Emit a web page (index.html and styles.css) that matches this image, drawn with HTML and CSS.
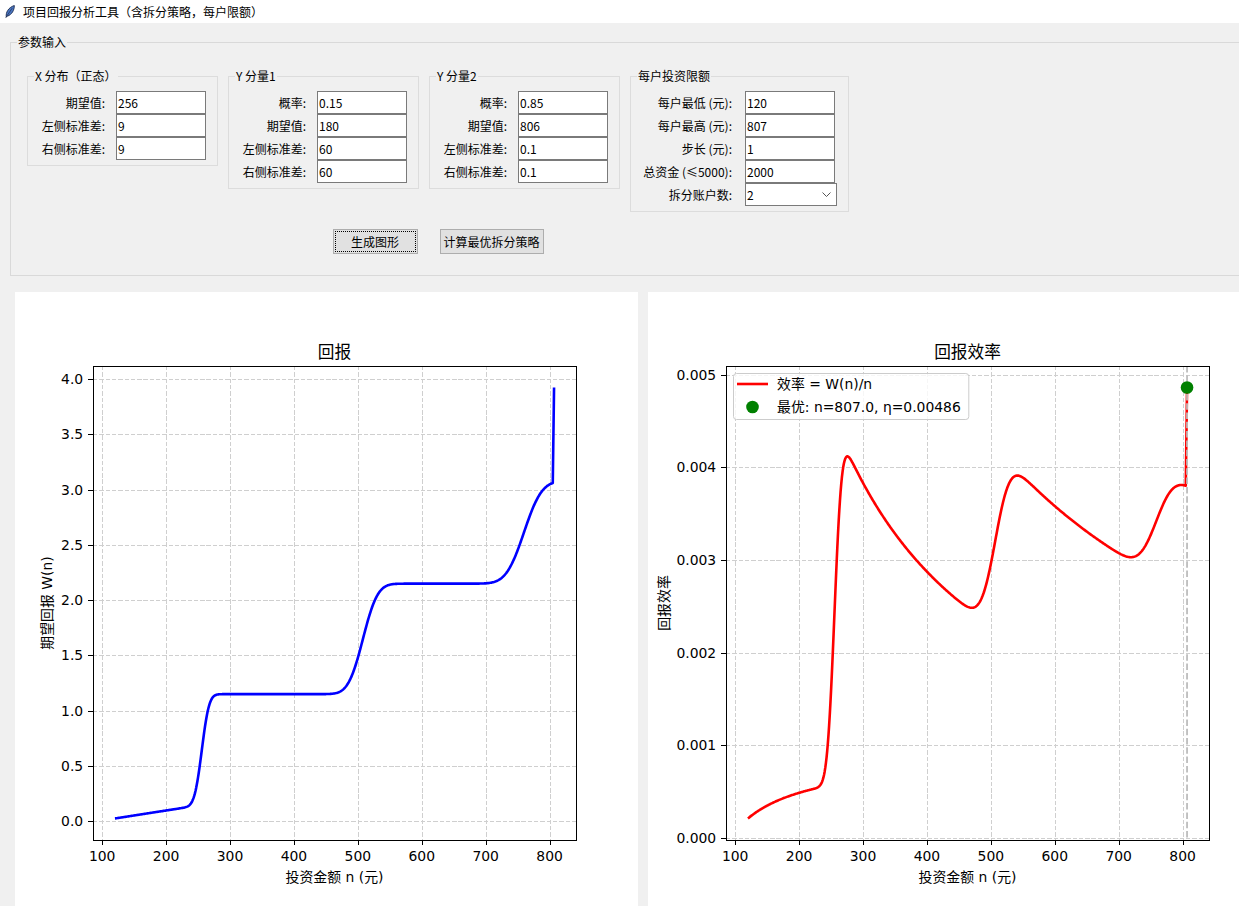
FILE: index.html
```html
<!DOCTYPE html>
<html lang="zh-CN">
<head>
<meta charset="utf-8">
<title>项目回报分析工具（含拆分策略，每户限额）</title>
<link rel="stylesheet" href="styles.css">
</head>
<body>
<div class="app">
  <header class="titlebar">
    <svg class="feather" viewBox="0 0 10 13" width="10" height="13" aria-hidden="true">
      <path d="M1.3 12 C0.6 7.6 3.2 2.6 9.3 0.5 C9.5 5 6.8 9.6 2.6 11.1 Z" fill="#4a76c2" stroke="#1c2b4f" stroke-width="0.9"/>
      <path d="M0.6 12.8 L7.2 3.2" stroke="#1c2b4f" stroke-width="0.7" fill="none"/>
    </svg>
    <span class="wintitle">项目回报分析工具（含拆分策略，每户限额）</span>
  </header>

  <fieldset class="params">
    <legend>参数输入</legend>
    <div class="params-inner">
      <div class="groups">
        <fieldset class="group">
          <legend>X 分布（正态）</legend>
          <div class="rows">
            <span class="lbl">期望值:</span><div class="entry">256</div>
            <span class="lbl">左侧标准差:</span><div class="entry">9</div>
            <span class="lbl">右侧标准差:</span><div class="entry">9</div>
          </div>
        </fieldset>
        <fieldset class="group">
          <legend>Y 分量1</legend>
          <div class="rows">
            <span class="lbl">概率:</span><div class="entry">0.15</div>
            <span class="lbl">期望值:</span><div class="entry">180</div>
            <span class="lbl">左侧标准差:</span><div class="entry">60</div>
            <span class="lbl">右侧标准差:</span><div class="entry">60</div>
          </div>
        </fieldset>
        <fieldset class="group">
          <legend>Y 分量2</legend>
          <div class="rows">
            <span class="lbl">概率:</span><div class="entry">0.85</div>
            <span class="lbl">期望值:</span><div class="entry">806</div>
            <span class="lbl">左侧标准差:</span><div class="entry">0.1</div>
            <span class="lbl">右侧标准差:</span><div class="entry">0.1</div>
          </div>
        </fieldset>
        <fieldset class="group">
          <legend>每户投资限额</legend>
          <div class="rows rows-wide">
            <span class="lbl">每户最低 (元):</span><div class="entry">120</div>
            <span class="lbl">每户最高 (元):</span><div class="entry">807</div>
            <span class="lbl">步长 (元):</span><div class="entry">1</div>
            <span class="lbl">总资金 (≤5000):</span><div class="entry">2000</div>
            <span class="lbl">拆分账户数:</span>
            <div class="entry combo"><span>2</span>
              <svg class="chev" viewBox="0 0 9 5" width="9" height="5" aria-hidden="true"><polyline points="0.5,0.5 4.5,4.5 8.5,0.5" fill="none" stroke="#555" stroke-width="1"/></svg>
            </div>
          </div>
        </fieldset>
      </div>
      <div class="actions">
        <button class="btn btn-gen" type="button">生成图形</button>
        <button class="btn btn-opt" type="button">计算最优拆分策略</button>
      </div>
    </div>
  </fieldset>

  <div class="charts">
    <div class="panel"><svg id="chart-w" class="mpl" width="623" height="614" viewBox="0 0 623 614"></svg></div>
    <div class="panel"><svg id="chart-eta" class="mpl" width="623" height="614" viewBox="0 0 623 614"></svg></div>
  </div>
</div>
<script src="script.js"></script>
</body>
</html>
```

FILE: styles.css
```css
html, body {
  margin: 0;
  padding: 0;
  overflow: hidden;
}
body {
  width: 1239px;
  height: 906px;
  background: #f0f0f0;
  font-family: "Noto Sans CJK SC", "Noto Sans", sans-serif;
  font-size: 12px;
  color: #000;
}
.app {
  width: 1281px;
}
.titlebar {
  height: 23px;
  background: #fff;
  display: flex;
  align-items: center;
  padding-left: 5px;
  gap: 8px;
  box-sizing: border-box;
}
.feather {
  display: block;
  flex: none;
}
.wintitle {
  font-size: 12px;
  line-height: 16px;
}

.params {
  margin: 11px 10px 0;
  padding: 0;
  border: 1px solid #d9d9d9;
  min-width: 0;
}
.params > legend,
.group > legend {
  margin-left: 6px;
  padding: 0 1px;
  line-height: 16px;
  font-size: 12px;
}
.params-inner {
  width: fit-content;
  padding: 18px 0 21px 16px;
}
.groups {
  display: flex;
  gap: 10px;
  align-items: flex-start;
}
.group {
  margin: 0;
  padding: 0;
  border: 1px solid #dcdcdc;
  min-width: 0;
}
.rows {
  display: grid;
  grid-template-columns: 64px 90px;
  grid-auto-rows: 23px;
  column-gap: 11px;
  padding: 7px 11px 5px 13px;
}
.rows-wide {
  grid-template-columns: 88px 92px;
  column-gap: 13px;
}
.lbl {
  justify-self: end;
  align-self: center;
  white-space: nowrap;
  line-height: 16px;
}
.entry {
  box-sizing: border-box;
  width: 90px;
  height: 23px;
  border: 1px solid #7a7a7a;
  background: #fff;
  padding: 0 1px;
  display: flex;
  align-items: center;
  line-height: 16px;
}
.combo {
  width: 92px;
  padding-right: 5px;
}
.combo .chev {
  margin-left: auto;
  display: block;
}
.actions {
  display: flex;
  justify-content: center;
  gap: 22px;
  margin-top: 17px;
}
.btn {
  box-sizing: border-box;
  height: 25px;
  margin: 0;
  padding: 0;
  border: 1px solid #adadad;
  background: #e1e1e1;
  font-family: inherit;
  font-size: 12px;
  color: #000;
  line-height: 16px;
}
.btn-gen {
  width: 85px;
  outline: 1px dotted #000;
  outline-offset: -3px;
}
.btn-opt {
  width: 104px;
}

.charts {
  display: flex;
  gap: 10px;
  padding: 16px 0 0 15px;
}
.panel {
  flex: none;
  width: 623px;
  height: 614px;
  background: #fff;
}
.mpl {
  display: block;
}
.mpl text {
  font-family: "DejaVu Sans", "Noto Sans CJK SC", sans-serif;
  fill: #000;
}
.mpl .ticklabel,
.mpl .axlabel,
.mpl .legtext {
  font-size: 13.9px;
}
.mpl .axtitle {
  font-size: 16.7px;
}
.mpl .grid {
  stroke: #cfcfcf;
  stroke-width: 1;
  stroke-dasharray: 4.4 1.9;
  shape-rendering: crispEdges;
}
.mpl .spine {
  fill: none;
  stroke: #000;
  stroke-width: 1.1;
  shape-rendering: crispEdges;
}
.mpl .tick {
  stroke: #000;
  stroke-width: 1.1;
  shape-rendering: crispEdges;
}
.mpl .series {
  fill: none;
  stroke-width: 2.6;
  stroke-linejoin: round;
  stroke-linecap: butt;
}
.mpl .series-blue { stroke: #0000ff; }
.mpl .series-red { stroke: #ff0000; }
.mpl .vline {
  stroke: #bdbdbd;
  stroke-width: 1.8;
  stroke-dasharray: 6.5 2.8;
}
.mpl .dot { fill: #008000; }
.mpl .legbox {
  fill: #fff;
  fill-opacity: 0.8;
  stroke: #cccccc;
  stroke-width: 1;
}
.mpl .leghandle {
  stroke: #ff0000;
  stroke-width: 2.6;
}
```

FILE: script.js
```js
(function () {
  var NS = 'http://www.w3.org/2000/svg';
  function el(tag, attrs, parent, text) {
    var e = document.createElementNS(NS, tag);
    for (var k in attrs) e.setAttribute(k, attrs[k]);
    if (text !== undefined) e.textContent = text;
    parent.appendChild(e);
    return e;
  }
  function erf(x) {
    var s = x < 0 ? -1 : 1;
    x = Math.abs(x);
    var t = 1 / (1 + 0.3275911 * x);
    var y = 1 - (((((1.061405429 * t - 1.453152027) * t) + 1.421413741) * t - 0.284496736) * t + 0.254829592) * t * Math.exp(-x * x);
    return s * y;
  }
  function Phi(z) { return 0.5 * (1 + erf(z / Math.SQRT2)); }
  function W(n) {
    var base = 0.025 + 0.0009 * (n - 120);
    var s1 = Phi((n - 256) / 9);
    return base * (1 - s1) + 1.15 * s1 +
      1.0 * Phi((n - 508) / 18) +
      0.93 * Phi((n - 760) / 22) +
      0.86 * Phi((n - 806) / 0.1);
  }

  var ns = [];
  for (var n = 120; n <= 807; n++) ns.push(n);
  var AX = { l: 78, r: 561, t: 74, b: 548 };
  var xmin = 120 - 0.05 * 687, xmax = 807 + 0.05 * 687;
  function sx(v) { return AX.l + (v - xmin) / (xmax - xmin) * (AX.r - AX.l); }

  function chart(svg, o) {
    var ys = ns.map(o.f);
    var lo = Math.min.apply(null, ys), hi = Math.max.apply(null, ys);
    var m = (hi - lo) * 0.05;
    var ymin = lo - m, ymax = hi + m;
    function sy(v) { return AX.b - (v - ymin) / (ymax - ymin) * (AX.b - AX.t); }

    var g = el('g', {}, svg);
    var t;
    for (t = 100; t <= 800; t += 100) {
      var x = Math.round(sx(t)) + 0.5;
      el('line', { 'class': 'grid', x1: x, x2: x, y1: AX.t, y2: AX.b }, g);
    }
    o.yticks.forEach(function (v) {
      var y = Math.round(sy(v)) + 0.5;
      el('line', { 'class': 'grid', x1: AX.l, x2: AX.r, y1: y, y2: y }, g);
    });

    var pts = ns.map(function (n, i) { return sx(n).toFixed(2) + ',' + sy(ys[i]).toFixed(2); }).join(' ');
    el('polyline', { 'class': 'series ' + o.cls, points: pts }, svg);

    if (o.extra) o.extra(svg, sy, ys);

    el('rect', { 'class': 'spine', x: AX.l + 0.5, y: AX.t + 0.5, width: AX.r - AX.l, height: AX.b - AX.t }, svg);

    for (t = 100; t <= 800; t += 100) {
      var tx = Math.round(sx(t)) + 0.5;
      el('line', { 'class': 'tick', x1: tx, x2: tx, y1: AX.b, y2: AX.b + 5 }, svg);
      el('text', { 'class': 'ticklabel', x: sx(t), y: AX.b + 20.5, 'text-anchor': 'middle' }, svg, String(t));
    }
    o.yticks.forEach(function (v) {
      var ty = Math.round(sy(v)) + 0.5;
      el('line', { 'class': 'tick', x1: AX.l - 5, x2: AX.l, y1: ty, y2: ty }, svg);
      el('text', { 'class': 'ticklabel', x: AX.l - 9.8, y: sy(v) + 5, 'text-anchor': 'end' }, svg, v.toFixed(o.dec));
    });

    var cx = (AX.l + AX.r) / 2;
    el('text', { 'class': 'axtitle', x: cx, y: 66, 'text-anchor': 'middle' }, svg, o.title);
    el('text', { 'class': 'axlabel', x: cx, y: 590, 'text-anchor': 'middle' }, svg, '投资金额 n (元)');
    var cy = (AX.t + AX.b) / 2;
    el('text', {
      'class': 'axlabel', x: o.ylx, y: cy, 'text-anchor': 'middle', 'dominant-baseline': 'central',
      transform: 'rotate(-90 ' + o.ylx + ' ' + cy + ')'
    }, svg, o.ylabel);

    if (o.legend) o.legend(svg);
  }

  var yt1 = [];
  for (var i = 0; i <= 8; i++) yt1.push(i * 0.5);
  chart(document.getElementById('chart-w'), {
    f: W, cls: 'series-blue', yticks: yt1, dec: 1,
    title: '回报', ylabel: '期望回报 W(n)', ylx: 32
  });

  var yt2 = [];
  for (var j = 0; j <= 5; j++) yt2.push(j * 0.001);
  chart(document.getElementById('chart-eta'), {
    f: function (n) { return W(n) / n; }, cls: 'series-red', yticks: yt2, dec: 3,
    title: '回报效率', ylabel: '回报效率', ylx: 16,
    extra: function (svg, sy, ys) {
      var x = sx(807);
      el('line', { 'class': 'vline', x1: x, x2: x, y1: AX.t, y2: AX.b }, svg);
      el('circle', { 'class': 'dot', cx: x, cy: sy(ys[ys.length - 1]), r: 6.3 }, svg);
    },
    legend: function (svg) {
      var box = el('rect', { 'class': 'legbox', x: 85.5, y: 81.5, width: 222, height: 46, rx: 3, ry: 3 }, svg);
      el('line', { 'class': 'leghandle', x1: 89, x2: 120, y1: 92, y2: 92 }, svg);
      el('circle', { 'class': 'dot', cx: 104.5, cy: 115, r: 6.3 }, svg);
      var t1 = el('text', { 'class': 'legtext', x: 129, y: 92, 'dominant-baseline': 'central' }, svg, '效率 = W(n)/n');
      var t2 = el('text', { 'class': 'legtext', x: 129, y: 115, 'dominant-baseline': 'central' }, svg, '最优: n=807.0, η=0.00486');
      var w = Math.max(t1.getComputedTextLength(), t2.getComputedTextLength());
      box.setAttribute('width', (129 - 85.5 + w + 8).toFixed(1));
    }
  });
})();
```
